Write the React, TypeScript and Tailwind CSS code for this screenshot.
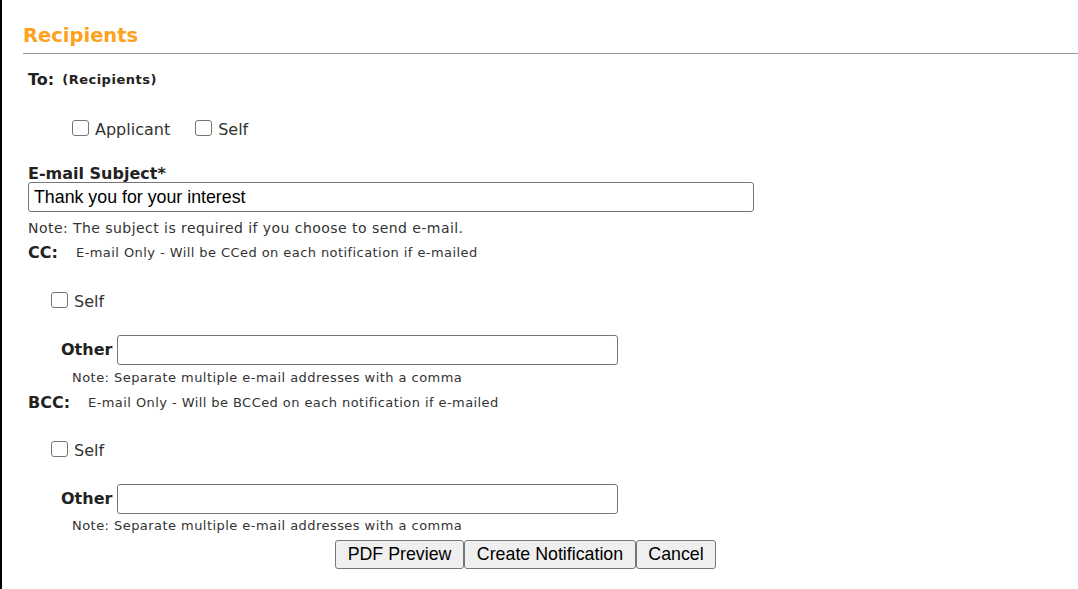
import React from "react";

const Box = () => (
  <span className="inline-block h-[16px] w-[17px] shrink-0 rounded-[3px] border border-[#767676] bg-white" />
);

const Check = ({ label, className = "" }: { label: string; className?: string }) => (
  <span className={"flex items-center " + className}>
    <Box />
    <span className="ml-[6px] text-[16px] leading-[24px] translate-y-[2px]">{label}</span>
  </span>
);

const Note = ({ children, className = "" }: { children: React.ReactNode; className?: string }) => (
  <div className={"leading-[16px] tracking-[0.45px] " + className}>{children}</div>
);

const OtherRow = ({ mt }: { mt: string }) => (
  <div className={"flex items-center pl-[59px] " + mt}>
    <span className="text-[16px] font-bold leading-[30px] text-[#222]">Other</span>
    <input
      type="text"
      className="ml-[5px] h-[30px] w-[501px] rounded-[3px] border border-[#767676] bg-white px-1 font-['Liberation_Sans',Arial,sans-serif] text-[17.8px] outline-none"
    />
  </div>
);

export default function App() {
  return (
    <div className="min-h-[589px] border-l-2 border-black bg-white font-['DejaVu_Sans',Verdana,sans-serif] text-[#333]">
      <div className="pl-[21px] pt-[24px]">
        <h2 className="text-[19.5px] font-bold leading-[24px] text-[#fda21c]">Recipients</h2>
        <div className="mt-[5px] h-px bg-[#999]" />
      </div>

      <div className="mt-[14px] flex h-[24px] items-center pl-[26px] text-[#222]">
        <span className="text-[16px] font-bold">To:</span>
        <span className="ml-[8px] text-[13px] font-bold tracking-[0.5px]">(Recipients)</span>
      </div>

      <div className="mt-[24px] flex h-[24px] items-center pl-[70px]">
        <Check label="Applicant" />
        <Check label="Self" className="ml-[25px]" />
      </div>

      <div className="mt-[25px] pl-[26px] text-[16px] font-bold leading-[18px] text-[#222]">E-mail Subject*</div>
      <div className="-mt-px pl-[26px]">
        <input
          type="text"
          defaultValue="Thank you for your interest"
          className="h-[30px] w-[726px] rounded-[3px] border border-[#767676] bg-white px-[5px] font-['Liberation_Sans',Arial,sans-serif] text-[17.8px] text-black outline-none"
        />
      </div>
      <Note className="mt-[8px] pl-[26px] text-[14px]">Note: The subject is required if you choose to send e-mail.</Note>

      <div className="mt-[7px] flex h-[20px] items-center pl-[26px]">
        <span className="w-[48px] text-[16px] font-bold text-[#222]">CC:</span>
        <span className="text-[13px] tracking-[0.43px]">E-mail Only - Will be CCed on each notification if e-mailed</span>
      </div>

      <div className="mt-[25px] flex h-[24px] items-center pl-[49px]">
        <Check label="Self" />
      </div>

      <OtherRow mt="mt-[23px]" />
      <Note className="mt-[5px] pl-[70px] text-[13px]">Note: Separate multiple e-mail addresses with a comma</Note>

      <div className="mt-[7px] flex h-[20px] items-center pl-[26px]">
        <span className="w-[60px] text-[16px] font-bold text-[#222]">BCC:</span>
        <span className="text-[13px] tracking-[0.43px]">E-mail Only - Will be BCCed on each notification if e-mailed</span>
      </div>

      <div className="mt-[24px] flex h-[24px] items-center pl-[49px]">
        <Check label="Self" />
      </div>

      <OtherRow mt="mt-[23px]" />
      <Note className="mt-[4px] pl-[70px] text-[13px]">Note: Separate multiple e-mail addresses with a comma</Note>

      <div className="mt-[6px] flex pl-[333px] font-['Liberation_Sans',Arial,sans-serif] text-[17.8px] text-black">
        <button className="h-[29px] w-[129px] rounded-[3px] border border-[#767676] bg-[#efefef]">PDF Preview</button>
        <button className="h-[29px] w-[172px] rounded-[3px] border border-[#767676] bg-[#efefef]">Create Notification</button>
        <button className="h-[29px] w-[80px] rounded-[3px] border border-[#767676] bg-[#efefef]">Cancel</button>
      </div>
    </div>
  );
}
